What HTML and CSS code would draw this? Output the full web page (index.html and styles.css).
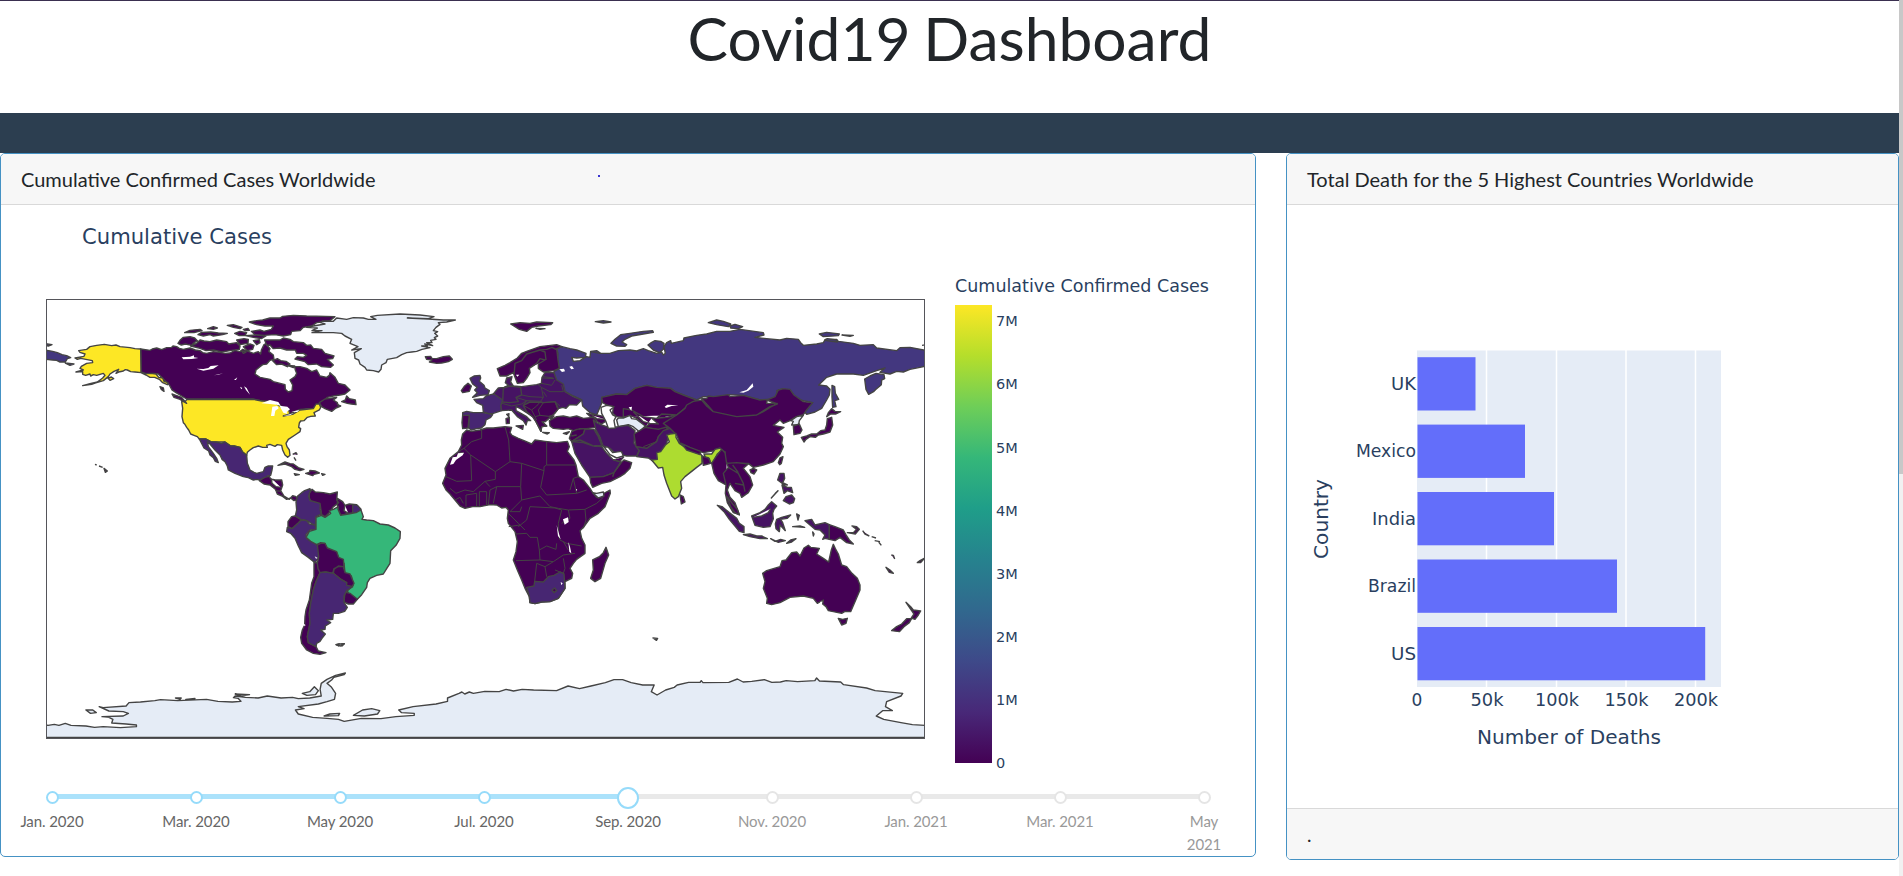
FILE: index.html
```html
<!DOCTYPE html>
<html lang="en">
<head>
<meta charset="utf-8">
<title>Covid19 Dashboard</title>
<link rel="stylesheet" href="styles.css">
</head>
<body>
<div class="page">
<div class="main">
<header class="title"><h1>Covid19 Dashboard</h1></header>
<div class="band"></div>
<div class="cards">
<section class="card card-map">
<div class="card-header">Cumulative Confirmed Cases Worldwide<span class="speck"></span></div>
<svg class="chart" width="1254" height="572" viewBox="1 205 1254 572">
<defs>
<linearGradient id="viridis" x1="0" y1="1" x2="0" y2="0">
<stop offset="0" stop-color="#440154"/><stop offset=".111" stop-color="#482878"/><stop offset=".222" stop-color="#3e4989"/><stop offset=".333" stop-color="#31688e"/><stop offset=".444" stop-color="#26828e"/><stop offset=".556" stop-color="#1f9e89"/><stop offset=".667" stop-color="#35b779"/><stop offset=".778" stop-color="#6ece58"/><stop offset=".889" stop-color="#b5de2b"/><stop offset="1" stop-color="#fde725"/>
</linearGradient>
<clipPath id="frame"><rect x="46" y="299" width="879" height="440"/></clipPath>
</defs>
<text class="t" x="82" y="244" font-size="20.500" textLength="190" lengthAdjust="spacingAndGlyphs">Cumulative Cases</text>
<g class="map" clip-path="url(#frame)">
<!-- North America -->
<g transform="translate(40 290) scale(.33333)">
<path class="ru" d="M15 180L38 184 52 188 66 194 80 197 92 203 82 206 76 216 60 216 50 211 38 210 15 208zM15 161L36 164 25 168 15 166zM76 219L102 222 90 226z"/>
<path class="c0" d="M302 177L330 181 337 177 350 174 365 179 380 173 395 172 399 168 410 170 418 175 430 178 450 174 466 180 480 182 488 188 500 190 520 185 540 187 555 190 570 189 585 181 600 185 608 178 625 184 640 190 655 185 662 192 664 180 672 164 680 160 683 168 690 176 686 184 700 195 702 208 690 211 680 222 668 224 660 230 648 240 645 252 660 262 675 265 690 268 700 275 712 278 735 284 736 298 745 306 756 302 758 285 750 270 765 260 770 250 766 240 764 230 780 230 800 235 815 245 830 240 840 258 860 262 868 256 870 248 885 262 895 280 915 285 930 300 915 312 900 315 880 318 862 322 850 335 838 342 838 350 825 355 780 358 745 374 735 360 720 345 700 335 680 336 665 333 640 327 440 327 425 318 408 308 396 300 388 285 375 272 355 252 340 250 320 252 303 246z"/>
<path class="us" d="M302 177L285 176 270 173 240 170 228 165 215 167 193 163 170 166 150 170 140 178 116 182 120 187 135 192 132 199 105 204 112 208 122 205 157 212 158 218 140 220 124 229 120 235 130 240 108 246 128 245 128 253 137 256 150 252 152 258 160 254 170 256 190 250 195 256 188 264 172 276 150 281 128 287 155 283 165 279 190 272 205 260 210 252 222 244 236 238 228 250 236 246 250 243 256 239 262 240 272 245 285 246 303 248zM204 265L214 261 221 266 210 271zM303 248L315 251 332 250 348 252 356 262 368 264 372 274 384 278 382 284 368 278 358 268 344 262 330 262 318 255z"/>
<path class="us" d="M440 329L640 328 665 333 700 334 725 352 745 358 750 372 730 378 760 372 780 360 820 356 828 342 838 342 842 352 838 360 822 368 826 378 812 379 802 382 792 392 782 393 778 399 776 412 782 416 780 425 765 435 745 448 738 460 741 470 748 480 750 496 743 502 735 495 728 480 725 466 712 464 705 469 690 463 680 466 682 472 668 472 655 468 640 473 630 480 622 487 620 496 607 485 600 472 582 468 572 468 555 456 545 456 528 456 512 455 498 447 478 447 472 440 462 436 452 432 446 420 440 412 434 402 430 398 426 380 428 355 425 335 436 334z"/>
<path class="c1" d="M478 447L498 447 512 455 528 456 545 460 555 456 572 468 582 468 600 472 607 485 620 496 622 520 630 540 642 547 650 550 670 545 675 532 685 528 698 528 696 540 692 556 682 558 680 565 665 572 652 568 640 570 625 563 610 560 585 550 565 540 562 528 555 515 546 508 540 495 525 480 510 462 502 455 505 470 520 490 530 505 535 518 526 514 520 503 510 495 506 483 492 474z"/>
<path class="c0" d="M658 572L674 562 688 559 692 567 706 570 725 570 728 585 722 602 732 618 748 628 758 617 768 620 776 628 762 632 752 624 740 628 728 619 712 612 706 598 690 585 672 582zM694 565L696 580 708 590 722 592M706 602L724 604"/>
<path class="c0" d="M714 526L735 516 750 521 760 522 775 533 792 538 780 542 765 538 755 530 735 522zM797 550L808 547 810 541 825 543 838 549 822 553 818 557zM763 551L778 554 766 556zM845 551L855 553 848 556zM758 493L768 488 772 494 M762 502L768 512M165 523L170 525M177 528L188 532M192 535L202 543 196 547zM396 312L408 316 425 322 440 340 420 328 402 322zM360 290L370 294 372 304 364 298z"/>
<path class="c0" d="M414 160L420 151 430 142 450 140 464 144 472 152 460 160 455 166 436 162 424 165zM452 168L470 160 480 150 492 153 510 155 530 150 560 155 566 162 590 158 600 168 598 178 570 182 545 186 520 180 498 182 480 175zM434 128L450 121 480 118 486 122 462 128zM474 134L485 127 512 126 535 129 562 130 548 134 520 138 510 134 490 138zM503 116L520 110 532 114 520 118zM562 106L580 104 606 112 600 116 580 112zM584 130L600 124 620 128 615 136 598 137zM590 150L612 146 625 148 624 160 600 164zM610 118L624 115 628 121 616 122zM628 96L650 92 668 90 690 84 720 84 728 79 760 76 800 78 885 80 870 92 845 96 830 98 815 108 790 112 780 122 755 124 752 134 730 138 705 134 672 136 645 134 634 124 660 120 672 124 694 118 700 108 675 108 650 104zM616 137L650 135 678 138 664 146 640 142zM674 150L690 150 720 150 730 144 750 148 760 155 790 158 800 166 812 165 820 175 845 178 855 190 882 198 878 206 862 208 880 225 872 232 845 230 830 222 805 224 795 215 765 207 772 200 790 202 800 196 790 190 770 190 766 180 740 180 720 174 700 176 690 165 680 166zM698 212L712 206 722 212 738 214 750 222 742 230 725 222 710 224zM742 226L764 228 760 233zM610 170L630 162 642 166 638 178 622 182zM640 152L658 149 660 158 650 164zM604 182L618 186 610 190zM905 335L916 330 920 318 928 326 946 330 948 344 934 342 922 340zM838 338L855 327 890 322 880 330 892 338 894 345 902 348 888 354 875 364 855 356 845 350zM890 342L896 344"/>
<path class="w" d="M425 202L450 200 462 196 462 202 475 204 455 207 430 208zM470 236L490 237 505 234 512 228 536 226 520 236 490 242zM522 256L550 250 535 254zM582 270L592 262 588 270zM600 290L607 294 604 298zM612 289L620 294 630 314 618 300zM664 340L690 330 715 336 722 347 710 344 690 342zM697 350L712 348 716 355 706 362 703 378 693 378zM718 347L742 350 750 358 740 366 742 372 730 368zM730 378L760 370 750 376zM754 365L778 360 772 366zM510 382L516 388z"/>
</g>
<!-- Greenland and Iceland -->
<g transform="translate(300 290) scale(.33333)">
<path class="na" d="M20 112L40 108 75 102 60 97 68 93 100 94 110 84 140 88 160 83 190 84 205 88 228 88 212 80 232 76 300 72 360 75 402 80 385 86 322 84 385 87 430 90 466 90 440 96 415 98 420 103 408 112 400 122 413 125 404 130 413 138 403 143 408 148 392 151 396 158 380 158 398 167 374 162 382 168 365 168 390 173 366 178 350 184 335 186 320 188 305 194 290 203 262 208 258 218 245 225 243 238 236 246 220 242 200 240 195 232 180 222 176 210 165 205 163 188 184 176 155 180 174 170 150 160 155 148 135 138 125 130 100 128 36 128 66 122 36 122 52 114z"/>
<path class="c0" d="M376 200L392 199 396 205 410 206 430 200 448 198 457 208 445 215 425 219 410 220 388 216 396 210 380 208z"/>
</g>
<!-- South America -->
<g transform="translate(270 470) scale(.33333)">
<path class="c0" d="M132 276L145 280 150 308 138 335 130 360 122 400 118 430 120 460 112 500 115 518 138 530 145 543 168 548 150 553 130 550 110 540 95 520 92 502 97 480 104 465 105 440 108 420 118 390 125 340 132 320z"/>
<path class="c1" d="M78 96L83 78 95 68 104 62 120 56 122 64 116 78 120 92 140 96 152 100 150 118 154 132 138 140 136 168 118 156 104 150 92 148 76 138 80 120z"/>
<path class="c0" d="M118 70L126 58 136 66 160 68 180 72 202 66 200 90 206 98 188 112 184 122 165 140 155 134 150 100 122 92 118 84zM202 85L218 95 225 106 238 102 260 104 254 128 235 130 212 136 204 116 202 104zM225 106L222 122 235 130M54 155L65 140 75 138 94 150 84 160 66 176 54 170z"/>
<path class="c1" d="M248 104L262 106 273 118 262 130 248 128zM94 150L110 152 118 162 136 165 138 178 120 180 108 194 110 205 122 214 138 218 148 240 145 265 135 278 115 262 95 248 85 228 75 205 62 190 50 185 52 172 66 176 84 160z"/>
<path class="br" d="M138 142L154 136 165 142 182 130 178 122 190 118 205 110 204 118 212 136 235 132 258 128 273 120 280 140 276 148 290 150 310 152 330 162 355 165 375 174 391 185 390 205 378 226 362 242 360 280 350 296 340 312 320 316 300 325 292 338 290 352 275 374 262 388 250 380 235 370 232 362 250 345 244 318 225 310 222 280 210 270 205 262 200 248 184 242 168 232 165 220 152 218 140 224 122 214 108 202 118 184 138 178z"/>
<path class="c0" d="M142 225L152 220 165 220 172 234 200 245 206 262 220 268 222 290 205 290 192 296 188 310 166 306 150 308 144 296 142 280 146 260zM192 298L205 288 220 290 225 308 240 312 252 340 246 350 228 346 230 338 210 326 190 310zM225 366L240 370 262 388 250 402 235 402 222 396z"/>
<path class="c1" d="M150 308L168 306 190 310 212 328 230 338 230 346 248 350 230 362 222 378 222 398 232 412 224 424 205 430 190 430 188 448 170 450 182 458 166 468 165 478 152 480 166 492 156 505 150 514 140 520 138 530 115 518 112 500 120 460 118 430 122 400 130 360 138 335z"/>
<path class="c0" d="M198 524L208 521 206 528zM212 522L223 521 216 528z"/>
<path class="w" d="M134 259L143 264 138 266zM99 466L105 462 106 468z"/>
</g>
<!-- Europe and Asia -->
<g transform="translate(430 300) scale(.33333)">
<path class="ru" d="M380 146L396 140 420 146 440 150 468 160 466 172 440 174 425 172 430 184 450 182 470 170 480 172 482 154 500 152 512 160 540 160 565 152 600 150 620 153 640 146 655 152 680 160 695 156 700 165 706 160 702 140 710 128 722 122 724 130 760 122 762 114 800 106 830 102 860 94 900 94 930 88 1000 98 1002 105 975 112 1010 116 1050 120 1070 115 1105 118 1112 128 1120 136 1160 132 1180 128 1186 118 1220 118 1225 124 1270 130 1290 136 1330 134 1340 144 1400 152 1410 143 1440 142 1490 152V198L1470 202 1440 208 1420 216 1400 214 1380 222 1350 217 1365 204 1340 212 1300 226 1270 222 1220 222 1190 232 1166 255 1190 258 1200 268 1198 285 1190 300 1175 325 1155 336 1130 343 1122 334 1148 308 1110 300 1080 285 1060 266 1040 272 1045 290 1020 298 990 300 940 286 895 284 890 292 820 290 800 300 760 285 735 275 722 265 680 262 650 256 615 265 590 284 560 282 515 292 515 310 500 345 480 338 458 318 455 300 430 288 405 275 390 250 375 240 372 215 388 205 382 180 384 160z"/>
<path class="ru" d="M1304 237L1320 228 1338 220 1362 224 1364 236 1355 240 1354 254 1338 268 1332 274 1316 283 1308 268zM1206 256L1214 260 1216 280 1226 298 1214 302 1218 320 1208 322 1206 290zM543 130L555 118 572 104 600 100 640 94 668 92 670 97 640 102 605 108 585 118 576 126 590 134 585 139 560 138zM654 135L664 128 675 122 692 124 702 130 700 148 688 158 670 150zM835 68L860 60 880 64 902 72 895 80 860 74zM900 78L915 73 938 80 925 86 902 84zM1168 102L1190 97 1228 102 1225 107 1180 110zM1236 105L1270 106 1260 109zM1184 121L1192 116 1220 120 1222 126zM496 65L520 62 543 66 520 69zM482 155L510 160M1476 136L1490 134"/>
<path class="c0" d="M202 206L225 196 240 188 262 174 275 160 290 154 330 140 380 134 396 140 380 146 384 180 388 205 372 212 340 216 325 205 325 192 345 180 330 176 320 190 298 205 300 218 290 235 280 248 262 250 255 232 250 218 230 228 210 228zM252 226L255 190 275 182 290 162 330 150 345 156 348 180M330 150L350 148 366 142 382 150M242 72L270 68 300 70 320 66 368 68 362 74 325 78 305 82 290 94 268 88zM318 85L345 86 330 88zM94 272L104 258 114 250 124 258 118 274 98 278z"/>
<path class="c1" d="M120 235L132 228 150 226 152 234 148 244 162 256 165 264 178 272 174 284 150 286 128 292 142 278 134 270 142 262 128 252z"/>
<path class="c2" d="M190 282L205 264 222 262 235 256 226 248 230 234 246 230 242 246 250 258 275 260 320 254 334 250 336 232 345 218 372 218 380 240 400 252 405 275 430 290 455 300 440 315 418 314 408 325 398 322 385 326 374 340 362 350 345 365 336 365 350 378 335 380 333 394 318 365 308 350 290 338 270 325 258 320 258 332 290 350 302 362 292 362 288 375 280 362 262 350 245 330 215 332 212 318 200 300z"/>
<path class="c1" d="M132 298L160 296 168 288 182 284 192 282 218 300 212 318 215 332 190 340 178 342 160 336 158 316 140 308z"/>
<path class="c2" d="M220 264L240 258 272 262 275 285 258 292 265 305 240 308 218 306z"/>
<path class="c1" d="M98 338L110 334 130 338 160 338 188 344 182 352 168 360 165 374 154 384 140 386 124 390 116 384 118 346 98 348z"/>
<path class="c0" d="M98 346L118 346 114 384 98 386 96 368z"/>
<path class="c0" d="M258 378L280 376 278 388zM228 356L238 352 238 370 229 371zM230 343L237 341 236 350zM338 397L358 398 352 402zM400 400L418 395 410 403z"/>
<path class="c0" d="M300 306L340 308 375 305 385 326 372 342 362 350 345 365 336 365 350 378 335 380 333 394 318 365 308 350 290 335 280 316z"/>
<path class="ln" d="M245 318L275 312 290 302 258 292M275 285L300 290 340 292 334 262 325 255M340 292L332 304 290 302M332 304L340 308 375 305 382 325M290 302L280 316 305 330 320 318 332 304M305 330L315 350 330 346 365 350M340 308L325 330 330 346M334 262L360 275 400 275M340 275L350 290M334 250L365 256 375 240M338 234L372 236M340 230L370 234M400 275L395 255M375 305L390 318M215 310L245 318M315 350L320 360"/>
<!-- Central Asia -->
<path class="c0" d="M515 292L560 282 590 284 615 265 650 256 680 262 722 265 735 275 760 285 800 300 770 320 740 345 720 360 755 375 740 405 715 385 685 388 645 382 620 355 600 346 580 352 560 350 548 340 550 320 530 315 518 308zM580 350L580 326 605 330 640 350 680 355 695 342 740 345M645 382L660 370 685 372 665 355M680 355L710 352 740 345M610 335L640 365 660 370M470 340L500 345 525 350 530 362 515 372 492 360zM485 346L500 356 525 358"/>
<path class="na" d="M560 360L565 354 580 354 600 346 605 356 620 358 646 378 628 395 610 380 595 374 565 380z"/>
<path class="c0" d="M358 362L380 350 400 348 420 352 440 348 460 355 490 352 500 362 498 382 470 386 450 386 430 392 415 386 400 388 370 385 360 378zM360 348L372 348 362 356zM425 395L440 388 465 386 460 402 440 415 425 425 418 415zM424 408L440 405"/>
<path class="c2" d="M490 360L500 368 515 375 545 385 565 380 595 376 615 392 612 430 628 450 620 468 590 468 555 460 540 445 520 440 510 412 498 390zM425 425L440 415 460 402 465 388 492 388 505 410 515 436 490 438 460 428zM425 425L450 420 490 438 515 440 530 460 548 478 572 486 552 518 520 530 480 532 455 495 435 460z"/>
<path class="c0" d="M612 402L645 382 685 388 720 378 700 395 685 410 680 425 650 445 618 440zM480 532L520 530 552 518 575 486 582 480 605 488 600 505 585 520 570 530 540 545 515 550 488 562 482 548zM552 518L548 530M550 480L570 484 582 470"/>
<path class="c2" d="M618 440L650 445 680 425 685 410 700 392 720 385 740 400 715 410 705 448 682 460 694 478 670 484 655 474 620 470 628 452z"/>
<path class="c0" d="M815 300L830 318 850 335 920 350 980 345 1020 320 1042 312 1010 300 1035 290 1045 270 1060 266 1080 268 1092 285 1120 305 1148 308 1130 330 1120 344 1100 350 1080 362 1060 370 1050 360 1030 376 1062 382 1042 396 1058 412 1055 430 1060 440 1050 462 1030 485 1000 495 970 502 955 490 930 490 905 500 885 485 885 455 865 450 820 458 780 445 750 430 740 405 720 385 700 370 740 345 765 325 770 315 790 304zM815 296L830 296 835 288 850 290 895 284 900 290 940 286 990 300 1012 298 1010 310 1042 310 1020 322 1000 335 980 345 920 350 850 335 835 318z"/>
<path class="na" d="M1082 362L1100 350 1120 346 1108 362 1106 374 1085 375 1090 364z"/>
<path class="c0" d="M1090 378L1108 372 1116 390 1110 400 1092 404zM1114 412L1130 408 1145 402 1160 402 1172 392 1185 390 1190 375 1192 356 1205 352 1208 375 1200 396 1180 402 1165 405 1156 412 1140 410 1128 418 1122 426zM1190 350L1195 338 1205 326 1215 334 1232 335 1218 342 1202 342z"/>
<path class="in" d="M680 458L692 455 706 435 718 425 710 405 720 402 738 400 738 412 748 430 770 445 800 456 812 462 816 468 816 490 800 502 785 514 765 530 752 545 755 565 745 590 735 597 725 588 710 550 702 525 698 502 685 504 675 492 665 480 682 478zM822 462L845 462 855 448 870 444 876 450 862 462 850 486 842 490 838 476 826 472z"/>
<path class="c0" d="M754 430L780 442 812 454 810 464 770 450zM816 468L836 474 842 490 820 496zM750 585L760 590 765 606 754 612zM845 490L858 470 875 448 885 458 890 490 920 488 955 492 940 505 960 530 968 555 955 578 935 592 930 580 915 572 900 550 892 570 900 592 915 608 928 644 910 638 892 608 886 580 888 555 865 542 852 520zM888 555L880 520 895 502 890 490M895 502L908 510 925 520 940 550 945 575M915 550L940 555M908 495L925 518"/>
<path class="ln" d="M680 425L640 440M545 385L560 380"/>
<path class="w" d="M388 208L402 206 405 214 396 216zM418 200L426 198 432 206 424 208zM928 277L950 270 968 250 970 260 955 272 940 278zM704 320L712 314 745 316 725 318 708 324zM596 322L606 320 604 332zM258 224L268 224 262 230z"/>
<path class="sea" d="M513 322L530 316 552 320 540 330 548 345 558 350 552 362 556 384 535 385 528 365 515 340z"/>
</g>
<!-- Africa -->
<g transform="translate(430 410) scale(.33333)">
<path class="c0" d="M98 72L110 60 125 64 150 60 170 54 190 54 225 50 245 52 240 68 246 76 265 85 282 92 305 102 315 90 345 94 380 98 412 94 418 110 412 124 432 150 438 165 445 200 460 210 480 235 488 248 500 262 540 240 541 250 525 290 505 310 480 325 462 350 450 362 455 385 465 405 465 430 440 448 430 460 420 475 428 490 425 505 405 515 405 535 385 565 360 575 335 576 315 581 300 578 298 560 285 535 275 510 262 480 250 450 258 425 262 395 255 365 235 340 232 325 235 300 228 292 215 294 200 285 180 284 150 290 128 290 105 295 90 288 75 270 60 252 48 240 38 220 48 195 45 175 60 145 85 125 95 105 94 90zM520 428L528 412 536 435 525 460 512 505 495 515 482 505 490 480 488 450 508 440z"/>
<path class="c1" d="M290 532L312 528 314 514 340 516 355 500 372 496 390 486 402 492 405 535 385 565 360 575 335 576 315 581 300 578 298 560z"/>
<path class="na" d="M488 248L500 250 520 246 522 258 505 264z"/>
<path class="ln" d="M155 58L155 85 125 95 102 115 122 135 196 185 240 155 236 90 225 50M102 115L85 125 102 130M122 135L125 212 80 214 48 200M196 185L196 208 165 214 130 245 105 240 78 250 60 235M240 155L275 160 342 182 342 170 350 165V96M350 165H438M275 160L272 230 200 230 190 280M342 182L332 232 350 255 440 250 430 205 445 200M272 230L275 270 330 258 360 290 385 295 415 300 465 298 500 280 520 262M275 270L240 305H270L275 290M235 310L265 340 285 360M300 290L290 330 265 350M300 290L375 294 395 300 385 340 385 370 390 390 410 400 455 408M258 372L290 370 300 382H322L328 420 350 408 378 418 380 400M328 420L330 450 258 452M330 450L370 455 400 435 435 430M370 455L345 470 320 460 314 514M345 470L350 500M400 445L405 475 400 490 375 480M465 298L468 330 460 355M415 300L420 325 395 340M430 205L420 240M108 290L108 255 140 250V290M148 290L148 245 170 245V285M175 285L180 240 200 230M75 270L90 262 100 280M440 250L470 240M165 214L180 230M236 350L270 345M400 395L415 420"/>
<path class="c0" d="M366 540L374 534 380 542 372 548z"/>
<path class="w" d="M399 328L414 322 416 336 404 344zM380 345L384 378 392 388 388 375zM415 396L420 410 424 430 418 425zM60 164L68 142 80 140 84 130 102 128 98 136 78 150 70 162zM438 236L442 240 438 242zM392 516L398 520 394 526z"/>
<path class="sea" d="M520 108L535 112 548 128 574 124 580 138 560 144 540 134z"/>
</g>
<!-- Oceania -->
<g transform="translate(700 430) scale(.33333)">
<path class="c0" d="M188 430L200 422 240 410 246 392 258 390 275 368 290 366 300 378 312 354 325 346 332 352 358 355 350 372 370 385 386 396 394 360 400 343 406 356 415 372 425 405 440 410 456 430 472 445 480 465 480 480 465 515 452 545 435 544 425 550 400 545 385 542 378 530 368 522 370 510 352 520 340 505 310 498 270 502 240 518 215 524 200 520 202 505 190 475 195 455zM415 565L428 568 442 565 438 580 425 585zM618 517L632 530 640 540 662 543 655 555 645 568 634 564 642 552zM635 565L628 578 612 590 598 605 575 602 590 590 605 582 620 566zM80 198L98 222 112 238 118 255 105 248 92 230zM150 120L160 115 170 120 162 132 153 128zM235 98L240 84 249 80 244 100 239 104z"/>
<path class="c2" d="M52 226L66 230 88 248 110 265 118 280 132 290 132 308 118 304 105 288 88 268 72 245zM130 314L150 312 170 318 185 318 202 326 180 326 150 320zM155 258L165 254 180 248 195 238 205 225 215 215 230 228 222 238 218 250 220 266 210 290 190 292 165 286zM160 262L185 258 205 248 212 236M315 272L335 268 345 285 375 278 388 284 388 328 375 325 368 328 375 315 360 300 345 298zM230 268L245 262 272 255 262 265 242 268 248 278 256 302 240 285 238 305 228 296 226 282zM212 326L225 334 242 328 256 332 235 337zM260 340L272 330 288 326 275 336zM290 252L298 256 294 270zM278 290L300 288 314 292zM338 306L342 312 340 318zM233 150L240 130 252 130 254 145 248 158 262 165 252 164zM246 165L262 172 274 172 278 188 262 182 252 190zM250 212L258 200 275 195 284 206 280 218 268 222zM214 204L226 190 234 182z"/>
<path class="c0" d="M388 284L405 290 430 300 440 318 448 330 460 342 440 338 420 322 405 332 388 328zM442 308L460 308 470 298 456 288 470 290 478 298 466 312zM488 302L495 312 508 318M515 320L528 324M524 332L540 335M536 336L544 346M574 375L580 376 584 387M558 412L570 420 580 430 568 427zM652 398L660 392 674 384 662 398z"/>
<path class="w" d="M358 522L364 512 362 526z"/>
</g>
<!-- Antarctica -->
<g transform="translate(40 630) scale(.57398 .33333)">
<path class="na" d="M5 283L14 286 25 283 33 286 44 280 54 286 80 288 95 292 110 290 140 293 168 290 168 285 150 282 125 279 127 268 120 262 108 260 145 258 154 250 145 245 120 243 103 230 110 233 150 228 155 218 175 216 200 212 210 209 240 212 290 208 310 214 335 216 350 214 345 205 337 203 340 198 358 202 380 204 396 198 420 204 440 202 450 206 470 204 490 198 488 178 490 160 500 148 515 136 532 129 530 134 512 142 508 150 500 160 508 172 515 190 513 208 500 215 485 222 450 230 460 236 445 240 450 252 475 262 500 265 520 268 530 274 560 265 594 266 620 260 652 256 652 250 630 248 625 240 650 230 690 222 710 214 710 204 730 190 735 186 740 192 748 186 755 190 775 184 800 185 812 178 825 183 840 178 860 180 900 182 920 168 940 176 960 168 985 158 1000 149 1015 149 1030 158 1050 165 1070 165 1065 185 1075 195 1090 180 1105 172 1110 165 1130 157 1150 157 1152 152 1155 158 1200 157 1215 147 1225 156 1240 154 1262 149 1275 157 1290 156 1300 152 1320 155 1350 152 1353 144 1358 153 1395 156 1400 164 1440 174 1455 182 1503 190 1500 198 1475 215 1473 230 1485 242 1468 242 1457 258 1470 268 1500 278 1520 284 1550 287V322H5zM80 240L92 240 98 248 88 250zM457 190L470 185 478 170 485 182 480 194 465 196zM546 256L562 240 578 236 592 242 588 252 565 258zM495 258L505 252 522 250 520 257zM236 204L246 204 244 208zM254 208L270 205 268 210zM340 192L365 194 350 198zM516 44L530 41 524 48zM1068 24L1076 25 1074 31z"/>
</g>
</g>
<rect x="46.5" y="299.5" width="878" height="439" fill="none" stroke="#55555a"/>
<text class="t" x="955" y="292" font-size="17.5" textLength="254" lengthAdjust="spacingAndGlyphs">Cumulative Confirmed Cases</text>
<rect x="955" y="305" width="37" height="458" fill="url(#viridis)"/>
<g class="t" font-size="14.500"><text x="996" y="767.500">0</text><text x="996" y="704.500">1M</text><text x="996" y="641.500">2M</text><text x="996" y="578.500">3M</text><text x="996" y="515.500">4M</text><text x="996" y="452.500">5M</text><text x="996" y="388.500">6M</text><text x="996" y="325.500">7M</text></g>
</svg>
<div class="slider">
<div class="rail"><div class="track"></div></div>
<ol class="marks">
<li class="on">Jan. 2020</li><li class="on">Mar. 2020</li><li class="on">May 2020</li><li class="on">Jul. 2020</li><li class="on current">Sep. 2020</li><li>Nov. 2020</li><li>Jan. 2021</li><li>Mar. 2021</li><li>May<br>2021</li>
</ol>
</div>
</section>
<section class="card card-bars">
<div class="card-header">Total Death for the 5 Highest Countries Worldwide</div>
<svg class="chart" width="611" height="603" viewBox="1287 205 611 603">
<rect x="1417" y="350.500" width="304" height="336.500" fill="#e5ecf6"/>
<path d="M1486.500 350V687M1556.500 350V687M1626 350V687M1695.500 350V687" stroke="#fff" stroke-width="1.500"/>
<g fill="#636efa"><rect x="1417.500" y="357.200" width="58" height="53.300"/><rect x="1417.500" y="424.600" width="107.500" height="53.300"/><rect x="1417.500" y="492" width="136.500" height="53.300"/><rect x="1417.500" y="559.500" width="199.500" height="53.300"/><rect x="1417.500" y="627" width="287.700" height="53.300"/></g>
<g class="t" font-size="17" text-anchor="end"><text x="1416" y="389.500" textLength="25" lengthAdjust="spacingAndGlyphs">UK</text><text x="1416" y="456.500" textLength="60" lengthAdjust="spacingAndGlyphs">Mexico</text><text x="1416" y="524.500" textLength="44" lengthAdjust="spacingAndGlyphs">India</text><text x="1416" y="591.500" textLength="48" lengthAdjust="spacingAndGlyphs">Brazil</text><text x="1416" y="659.500" textLength="25" lengthAdjust="spacingAndGlyphs">US</text></g>
<g class="t" font-size="17" text-anchor="middle"><text x="1417" y="706">0</text><text x="1487" y="706" textLength="33" lengthAdjust="spacingAndGlyphs">50k</text><text x="1557" y="706" textLength="44" lengthAdjust="spacingAndGlyphs">100k</text><text x="1626.500" y="706" textLength="44" lengthAdjust="spacingAndGlyphs">150k</text><text x="1696" y="706" textLength="44" lengthAdjust="spacingAndGlyphs">200k</text></g>
<text class="t" x="1477" y="744" font-size="20" textLength="184" lengthAdjust="spacingAndGlyphs">Number of Deaths</text>
<text class="t" transform="translate(1328 559) rotate(-90)" font-size="19.500" textLength="80" lengthAdjust="spacingAndGlyphs">Country</text>
</svg>
<div class="card-footer">.</div>
</section>
</div>
</div>
<div class="scrollbar"><div class="thumb"></div></div>
</div>
</body>
</html>
```
FILE: styles.css
```css
* { box-sizing: border-box; }
body { margin: 0; font-family: Lato, "Liberation Sans", sans-serif; color: #212529; background: #fff; overflow: hidden; }
.page { display: flex; width: 1903px; height: 876px; }
.main { width: 1899px; border-top: 1px solid #3a2f50; }
.title { height: 112px; text-align: center; }
.title h1 { margin: 0; font-size: 60.5px; font-weight: 400; line-height: 73px; word-spacing: -3px; }
.band { height: 40px; background: #2c3e50; }
.cards { display: flex; align-items: flex-start; gap: 30px; }
.card { border: 1px solid #4592c4; border-radius: 5px; background: #fff; overflow: hidden; display: flex; flex-direction: column; }
.card-map { width: 1256px; height: 704px; }
.card-bars { width: 613px; height: 707px; }
.card-header { height: 51px; padding: 0 20px; background: #f7f7f7; border-bottom: 1px solid #d9d9d9; font-size: 20px; line-height: 50px; flex: none; display: flex; }
.card-footer { flex: 1; border-top: 1px solid #d9d9d9; background: #f7f7f7; padding: 14px 20px; font-size: 19px; line-height: 24px; }
.speck { width: 2px; height: 2px; background: #3a35d0; margin: 21px 0 0 222px; }
.chart { display: block; flex: none; }
.t { font-family: "DejaVu Sans", Verdana, sans-serif; fill: #2a3f5f; }
.map path { stroke: #444; stroke-width: 1.4; stroke-linejoin: round; vector-effect: non-scaling-stroke; }
.map .c0 { fill: #440154; }
.map .c1 { fill: #472672; }
.map .c2 { fill: #461363; }
.map .ru { fill: #43377f; }
.map .us { fill: #fde725; }
.map .br { fill: #35b779; }
.map .in { fill: #addc30; }
.map .na { fill: #e5ecf6; }
.map .ln { fill: none; stroke-width: 1; }
.map .w { fill: #fff; stroke: none; }
.map .sea { fill: #fff; }
.slider { padding-top: 17px; }
.rail { width: 1154px; height: 5px; margin-left: 50px; border-radius: 3px; background: #e9e9e9; }
.track { width: 577px; height: 5px; border-radius: 3px; background: #abe2fb; }
.marks { display: flex; list-style: none; width: 1296px; margin: -7px 0 0 -21px; padding: 0; }
.marks li { width: 144px; text-align: center; font-size: 15px; letter-spacing: -.1px; line-height: 23px; color: #999; flex: none; }
.marks li::before { content: ""; display: block; width: 9px; height: 9px; border: 2px solid #e5e5e5; border-radius: 50%; background: #fff; margin: 0 auto 5px; }
.marks li::before { position: relative; top: -1px; }
.marks .on { color: #666; }
.marks .on::before { border-color: #96dbfa; }
.marks .current::before { width: 18px; height: 18px; margin: -4px auto 0; }
.scrollbar { width: 4px; background: #f1f1f1; }
.thumb { height: 474px; background: #c8c8c8; }
```
